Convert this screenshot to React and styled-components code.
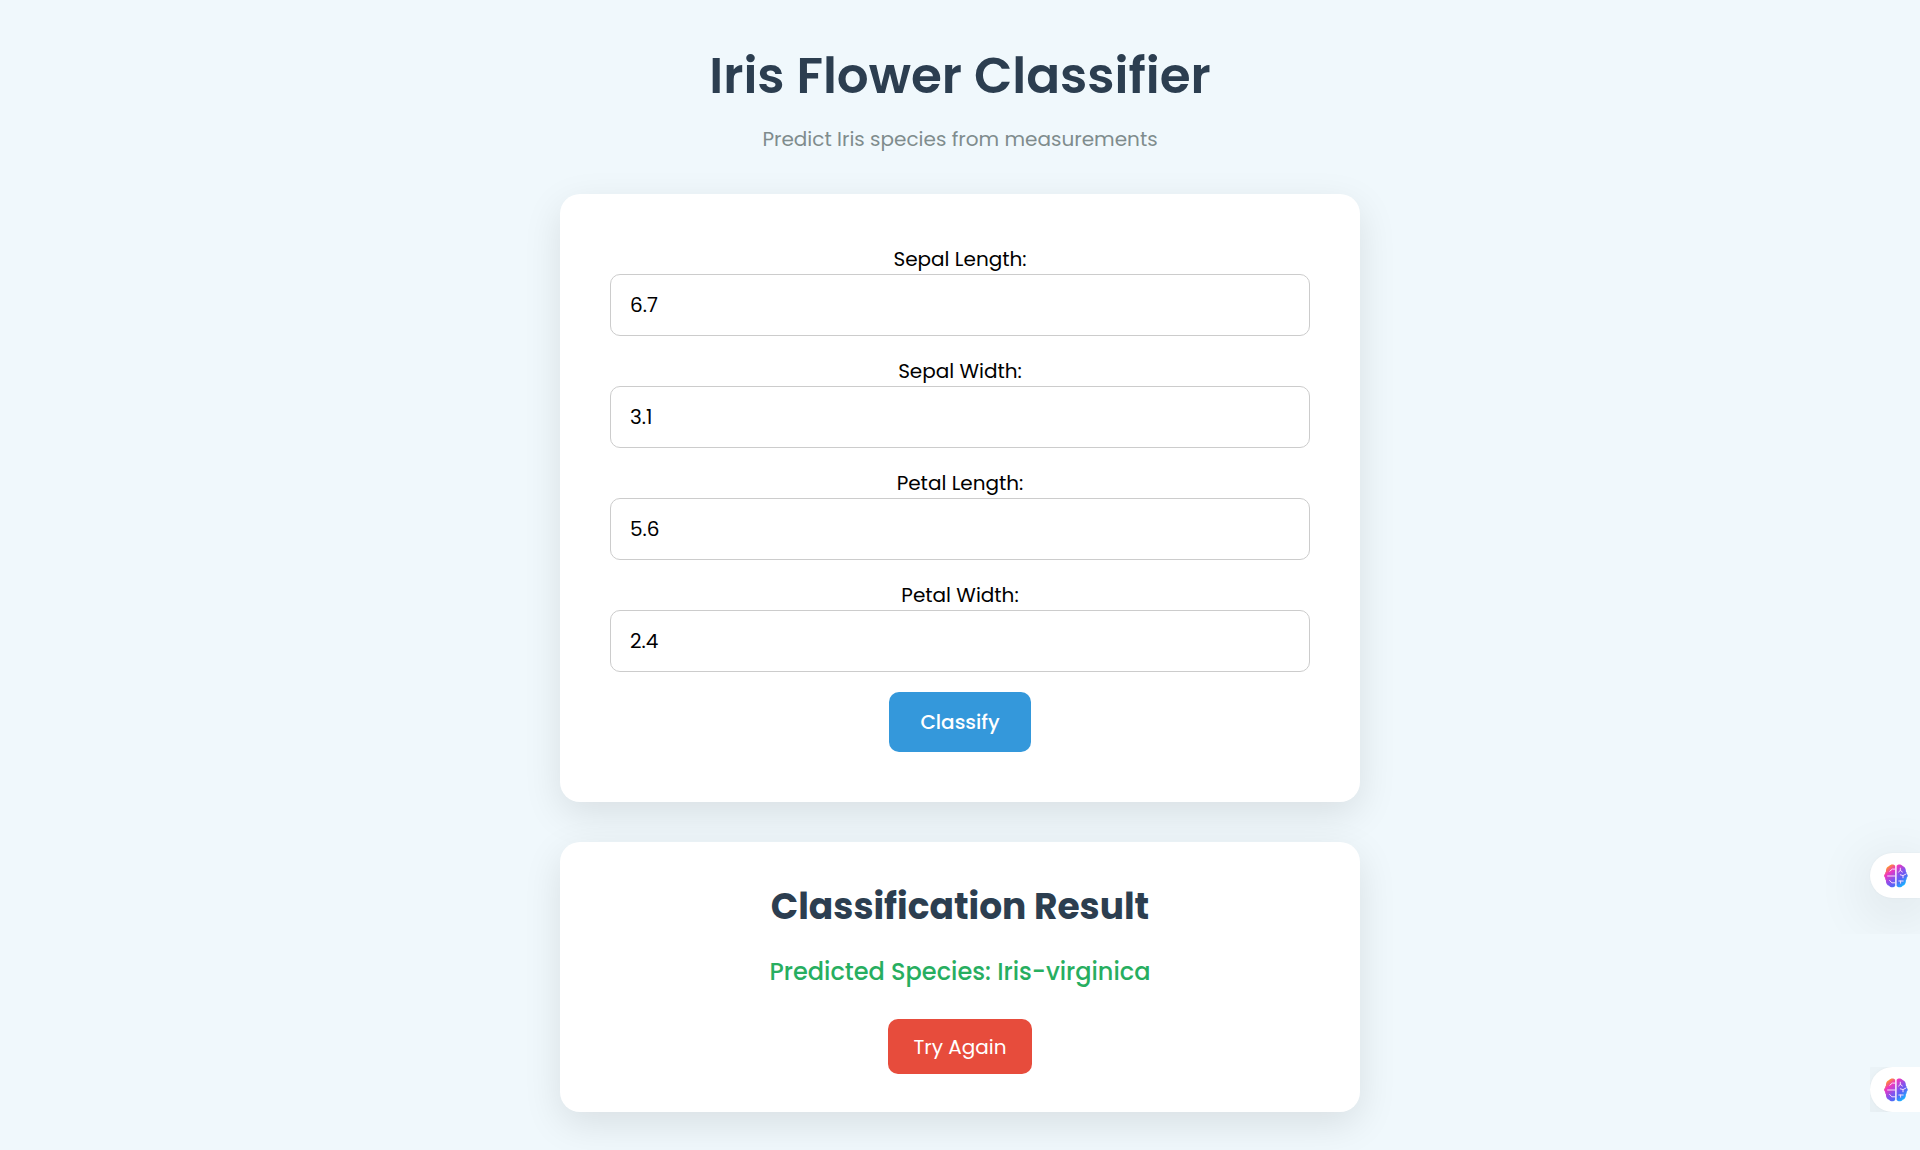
import React, { useState } from "react";
import styled, { createGlobalStyle } from "styled-components";

const GlobalStyle = createGlobalStyle`
  * { box-sizing: border-box; }
  body {
    margin: 0;
    min-height: 100vh;
    background: #f0f8fc;
    color: #000;
    font-family: Poppins, Inter, "Noto Sans", sans-serif;
    font-size: 20px;
    line-height: 30px;
  }
`;

const Page = styled.div`
  display: flex;
  flex-direction: column;
  align-items: center;
  min-height: 100vh;
  padding: 38px 20px;
  text-align: center;
`;

const Header = styled.header`
  display: flex;
  flex-direction: column;
  gap: 10px;
  margin-bottom: 40px;
`;

const Title = styled.h1`
  margin: 0;
  font-size: 50px;
  font-weight: 600;
  line-height: 76px;
  color: #2c3e50;
`;

const Subtitle = styled.p`
  margin: 0;
  color: #7f8c8d;
`;

const Main = styled.main`
  display: flex;
  flex-direction: column;
  gap: 40px;
  width: 100%;
  max-width: 800px;
`;

const Card = styled.section`
  display: flex;
  flex-direction: column;
  align-items: center;
  padding: ${(p) => p.$padding};
  border-radius: 20px;
  background: #fff;
  box-shadow: 0 12px 38px rgba(0, 0, 0, 0.1);
`;

const Form = styled.form`
  display: flex;
  flex-direction: column;
  align-items: center;
  gap: 20px;
  width: 100%;
`;

const Field = styled.div`
  display: flex;
  flex-direction: column;
  width: 100%;
`;

const Input = styled.input`
  width: 100%;
  height: 62px;
  padding: 0 19px;
  border: 1px solid #ccc;
  border-radius: 10px;
  background: #fff;
  color: #000;
  font: inherit;
`;

const Button = styled.button`
  padding: ${(p) => p.$padding};
  border: 0;
  border-radius: 10px;
  background: ${(p) => p.$color};
  color: #fff;
  font: inherit;
  font-weight: ${(p) => p.$weight};
  cursor: pointer;
`;

const ResultTitle = styled.h2`
  margin: 0;
  font-size: 36px;
  font-weight: 700;
  line-height: 54px;
  color: #2c3e50;
`;

const Species = styled.p`
  margin: 20px 0 29px;
  font-size: 24px;
  font-weight: 500;
  line-height: 36px;
  color: #27ae60;
`;

const SideTab = styled.button`
  position: absolute;
  right: 0;
  top: ${(p) => p.$top};
  display: flex;
  align-items: center;
  width: 50px;
  height: 45px;
  padding: 0 0 0 14px;
  border: 0;
  border-radius: 23px 0 0 23px;
  background: #fff;
  box-shadow: 0 12px 60px rgba(0, 0, 0, 0.14), 0 0 2px rgba(0, 0, 0, 0.05);
  clip-path: inset(${(p) => p.$clip});
  cursor: pointer;
`;

function Brain({ id }) {
  const fill = `url(#${id})`;
  return (
    <svg width="24" height="24" viewBox="0 0 24 24" fill="none" aria-hidden="true">
      <defs>
        <linearGradient id={id} x1="4" y1="2" x2="20" y2="21" gradientUnits="userSpaceOnUse">
          <stop offset="0" stopColor="#ff9a22" />
          <stop offset="0.24" stopColor="#ee35c0" />
          <stop offset="0.55" stopColor="#8354ee" />
          <stop offset="0.72" stopColor="#5a62f5" />
          <stop offset="1" stopColor="#18b4ff" />
        </linearGradient>
      </defs>
      <path fill={fill} d="M11.2 1.7C9.8 0 6.6 0 5.2 2 2.9 2.8 1.7 5 2 7.4 1.1 8.2 1.1 9.4 1.1 9.8-.3 11-.3 12.5 1.1 13.8c0 .8 0 1.8.9 2.6-.3 2.4.8 4.6 3.1 5.4 1.4 2 4.7 2 6.1.3Z" />
      <path fill={fill} d="M12.6 1.7C14 0 17.2 0 18.6 2c2.3.8 3.5 3 3.2 5.4.9.8.9 2 .9 2.4 1.4 1.2 1.4 2.7 0 4 0 .8 0 1.8-.9 2.6.3 2.4-.8 4.6-3.1 5.4-1.4 2-4.7 2-6.1.3Z" />
      <path stroke="#f8dcfb" strokeWidth="1" strokeLinecap="round" strokeLinejoin="round" d="M11 5.1H8.3L5.8 7.2M3.6 12H11M5.6 16.4 7.8 18.8H11M14.6 8l1.7-1.6V4.2M16.3 6.4 18.4 8M16.3 10.8l2.7.8 3-1.6M19 11.6v2.2M14.8 17h4.4M16.6 17v2.2" />
    </svg>
  );
}

const fields = [
  ["sepal-length", "Sepal Length:", "6.7"],
  ["sepal-width", "Sepal Width:", "3.1"],
  ["petal-length", "Petal Length:", "5.6"],
  ["petal-width", "Petal Width:", "2.4"],
];

export default function App() {
  const [values, setValues] = useState(
    Object.fromEntries(fields.map(([id, , value]) => [id, value]))
  );

  return (
    <>
      <GlobalStyle />
      <Page>
        <Header>
          <Title>Iris Flower Classifier</Title>
          <Subtitle>Predict Iris species from measurements</Subtitle>
        </Header>
        <Main>
          <Card $padding="50px">
            <Form onSubmit={(e) => e.preventDefault()}>
              {fields.map(([id, label]) => (
                <Field key={id}>
                  <label htmlFor={id}>{label}</label>
                  <Input
                    id={id}
                    value={values[id]}
                    onChange={(e) => setValues({ ...values, [id]: e.target.value })}
                  />
                </Field>
              ))}
              <Button type="submit" $color="#3498db" $weight={500} $padding="15px 31px">
                Classify
              </Button>
            </Form>
          </Card>
          <Card $padding="38px">
            <ResultTitle>Classification Result</ResultTitle>
            <Species>Predicted Species: Iris-virginica</Species>
            <Button type="button" $color="#e74c3c" $weight={400} $padding="13px 25px 12px">
              Try Again
            </Button>
          </Card>
        </Main>
      </Page>
      <SideTab type="button" aria-label="Open assistant" $top="853px" $clip="-80px 0 -36px -80px">
        <Brain id="brain-upper" />
      </SideTab>
      <SideTab type="button" aria-label="Open assistant" $top="1067px" $clip="0">
        <Brain id="brain-lower" />
      </SideTab>
    </>
  );
}
